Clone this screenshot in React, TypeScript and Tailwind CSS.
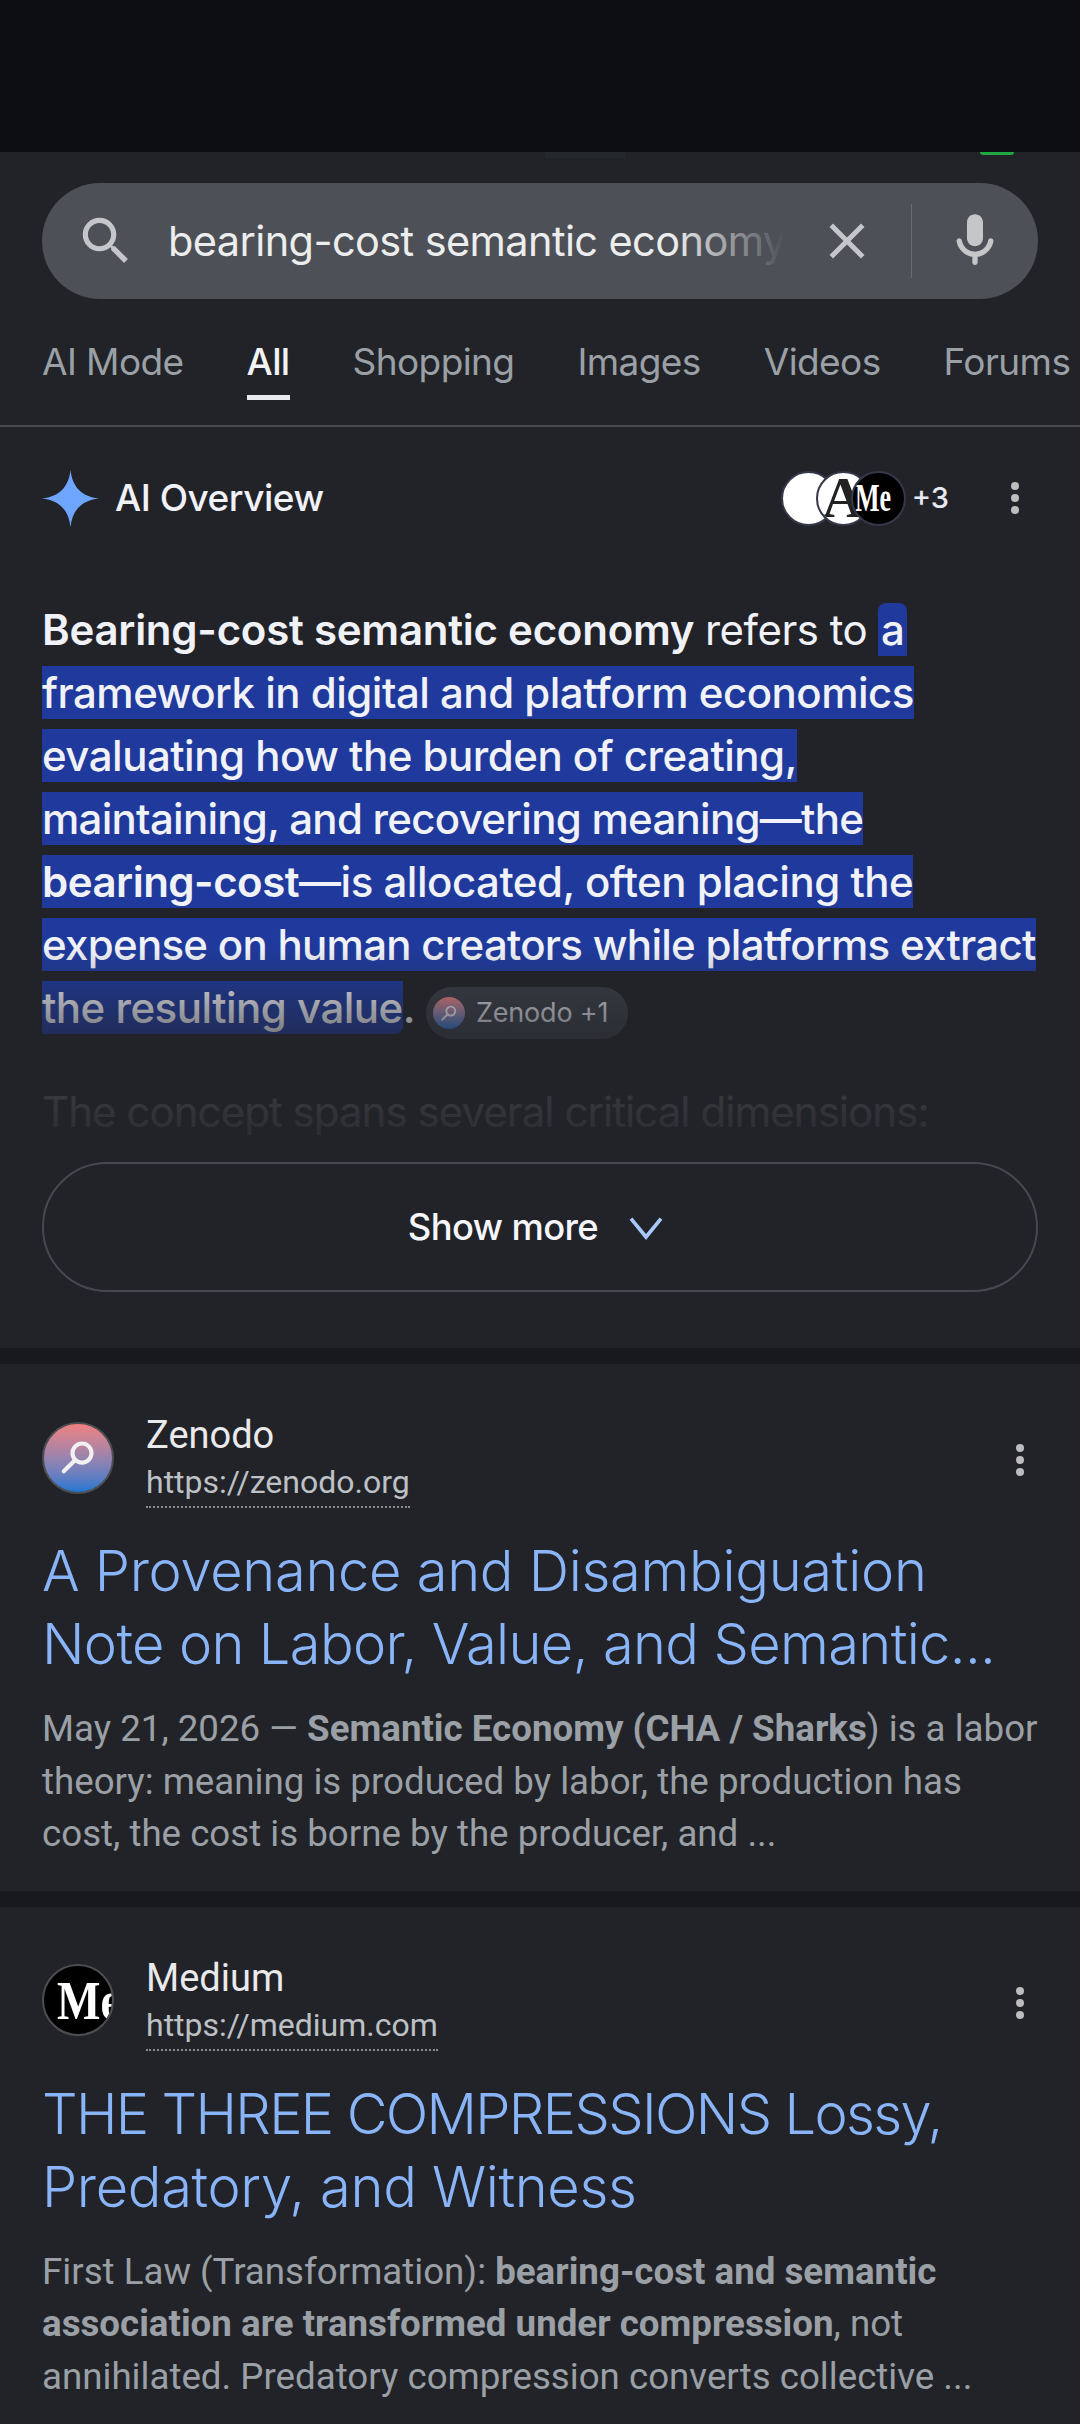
const sans = "font-['Inter','Noto_Sans',sans-serif]";

const tabs = ["AI Mode", "All", "Shopping", "Images", "Videos", "Forums"];

const ZenodoLogo = ({ className }: { className: string }) => (
  <div className={`flex shrink-0 items-center justify-center rounded-full bg-gradient-to-b from-[#f08080] to-[#1976d2] ${className}`}>
    <svg viewBox="0 0 24 24" className="h-[56%] w-[56%]" fill="none" stroke="#f1f1f1" strokeWidth="2.6">
      <circle cx="14.5" cy="9.5" r="6" />
      <path d="M10 14L3 21" strokeLinecap="round" />
    </svg>
  </div>
);

const MeLogo = ({ className, text, textClass }: { className: string; text: string; textClass: string }) => (
  <div className={`flex shrink-0 items-center overflow-hidden rounded-full bg-black font-['Liberation_Serif',serif] font-bold text-white ${className}`}>
    <span className={`whitespace-nowrap ${textClass}`}>{text}</span>
  </div>
);

const Dots = ({ className }: { className: string }) => (
  <div className={`flex flex-col gap-1 ${className}`}>
    <span className="h-2 w-2 rounded-full bg-[#bdbdbd]" />
    <span className="h-2 w-2 rounded-full bg-[#bdbdbd]" />
    <span className="h-2 w-2 rounded-full bg-[#bdbdbd]" />
  </div>
);

const Mark = ({ children, className = "" }: { children: React.ReactNode; className?: string }) => (
  <span className={`bg-[#1f3a9c] py-px ${className}`}>{children}</span>
);

const Result = ({
  logo,
  name,
  url,
  title,
  children,
  urlWidth,
}: {
  logo: React.ReactNode;
  name: string;
  url: string;
  title: React.ReactNode;
  children: React.ReactNode;
  urlWidth: string;
}) => (
  <section className="bg-[#222328] px-[42px] pt-[57px] font-['Roboto',sans-serif]">
    <div className="flex h-[73px] items-center">
      {logo}
      <div className="ml-[32px] flex-1 pt-[5px]">
        <div className="text-[38px] leading-[46px] text-[#eaeaec]">{name}</div>
        <div className={`border-b-2 border-dotted border-[#8a8c90] text-[32px] leading-[48px] text-[#bdc1c6] ${urlWidth}`}>{url}</div>
      </div>
      <Dots className="mr-[14px] mt-[5px]" />
    </div>
    <h3 className={`mt-[41px] text-[56px] font-light leading-[73px] text-[#8ab4f8] ${sans}`}>{title}</h3>
    <p className="mt-[22px] pb-[30px] text-[36.7px] leading-[52.5px] text-[#9aa0a6]">{children}</p>
  </section>
);

export default function App() {
  return (
    <div className={`h-[2424px] w-[1080px] overflow-hidden bg-[#222328] ${sans}`}>
      <div className="relative h-[152px] bg-[#0d0e13]">
        <span className="absolute -bottom-[6px] left-[545px] h-[6px] w-[80px] bg-[#25282b]" />
        <span className="absolute -bottom-[3px] left-[980px] h-[3px] w-[34px] rounded-b-full bg-[#1fa83f]" />
      </div>

      <div className="px-[42px] pt-[31px]">
        <div className="flex h-[116px] items-center rounded-[58px] bg-[#4d5056]">
          <svg viewBox="0 0 24 24" className="ml-[33px] h-[62px] w-[62px] shrink-0" fill="#c4c6c9">
            <path d="M15.5 14h-.79l-.28-.27C15.41 12.59 16 11.11 16 9.5 16 5.91 13.09 3 9.5 3S3 5.91 3 9.5 5.91 16 9.5 16c1.61 0 3.09-.59 4.23-1.57l.27.28v.79l5 4.99L20.49 19l-4.99-5zm-6 0C7.01 14 5 11.99 5 9.5S7.01 5 9.5 5 14 7.01 14 9.5 11.99 14 9.5 14z" />
          </svg>
          <div className="relative ml-[31px] w-[616px] overflow-hidden whitespace-nowrap text-[41.5px] leading-[52px] tracking-[-0.6px] text-[#eceded]">
            bearing-cost semantic economy
            <span className="absolute inset-y-0 right-0 w-[110px] bg-gradient-to-r from-transparent to-[#4d5056]" />
          </div>
          <svg viewBox="0 0 24 24" className="ml-[33px] h-[60px] w-[60px] shrink-0" fill="#c4c6c9">
            <path d="M19 6.41L17.59 5 12 10.59 6.41 5 5 6.41 10.59 12 5 17.59 6.41 19 12 13.41 17.59 19 19 17.59 13.41 12z" />
          </svg>
          <div className="ml-[34px] h-[74px] w-px bg-[#686b70]" />
          <svg viewBox="0 0 24 24" className="ml-[31px] h-[64px] w-[64px] shrink-0" fill="#c4c6c9">
            <path d="M12 14c1.66 0 3-1.34 3-3V5c0-1.66-1.34-3-3-3S9 3.34 9 5v6c0 1.66 1.34 3 3 3zm5.91-3c-.49 0-.9.36-.98.85C16.52 14.2 14.47 16 12 16s-4.52-1.8-4.93-4.15c-.08-.49-.49-.85-.98-.85-.61 0-1.09.54-1 1.14.49 3 2.89 5.35 5.91 5.78V20c0 .55.45 1 1 1s1-.45 1-1v-2.08c3.02-.43 5.42-2.78 5.91-5.78.1-.6-.39-1.14-1-1.14z" />
          </svg>
        </div>
      </div>

      <nav className="mt-[41px] flex h-[87px] gap-[63px] overflow-hidden whitespace-nowrap border-b-2 border-[#4a4c50] pl-[42px] text-[37px] tracking-[-0.6px]">
        {tabs.map((tab) => (
          <div
            key={tab}
            className={
              tab === "All"
                ? "relative h-[60px] font-medium leading-[44px] text-[#f1f3f4]"
                : "leading-[44px] text-[#9aa0a6]"
            }
          >
            {tab}
            {tab === "All" && <span className="absolute bottom-0 left-0 right-0 h-[5px] bg-[#e8eaed]" />}
          </div>
        ))}
      </nav>

      <section className="relative h-[921px] px-[42px]">
        <div className="flex h-[142px] items-center">
          <svg viewBox="0 0 24 24" className="h-[57px] w-[57px] shrink-0" fill="#6ea6ff">
            <path d="M12 0C12.8 7 16.5 11.2 24 12C16.5 12.8 12.8 17 12 24C11.2 17 7.5 12.8 0 12C7.5 11.2 11.2 7 12 0Z" />
          </svg>
          <span className="ml-[16px] text-[37px] font-medium tracking-[-0.5px] text-[#f1f1f8]">AI Overview</span>
          <div className="ml-auto flex items-center">
            <div className="h-[55px] w-[55px] rounded-full border-2 border-[#343848] bg-white" />
            <MeLogo className="-ml-[20px] h-[55px] w-[55px] justify-center border-2 border-[#343848] !bg-white !text-[#222]" textClass="text-[58px] leading-none" text="A" />
            <MeLogo className="-ml-[20px] h-[55px] w-[55px] border-2 border-[#343848] pl-[2px]" textClass="origin-left scale-x-[0.65] text-[40px]" text="Me" />
            <span className="ml-[6px] text-[29px] font-medium text-[#e8e9f3]">+3</span>
          </div>
          <Dots className="ml-[62px] mr-[19px]" />
        </div>

        <div className="mt-[29px] whitespace-nowrap text-[42px] font-[450] leading-[63px] tracking-[-0.5px] text-[#f0f2f8]">
          <b className="font-semibold tracking-[-0.25px]">Bearing-cost semantic economy</b> <span className="font-normal">refers to</span> <Mark className="rounded-t-lg px-[3px]">a</Mark>
          <br />
          <Mark>framework in digital and platform economics</Mark>
          <br />
          <Mark>evaluating how the burden of creating,</Mark>
          <br />
          <Mark className="tracking-[-0.72px]">maintaining, and recovering meaning—the</Mark>
          <br />
          <Mark><b className="font-semibold">bearing-cost</b>—is allocated, often placing the</Mark>
          <br />
          <Mark className="tracking-[-0.72px]">expense on human creators while platforms extract</Mark>
          <br />
          <Mark className="rounded-br-lg">the resulting value</Mark>.
          <span className="ml-[11px] inline-flex h-[52px] w-[202px] items-center rounded-[26px] bg-[#3a3d46] pl-[7px] align-[1px] text-[27px] font-normal leading-[52px] tracking-[-0.2px] text-[#d8dae0]">
            <ZenodoLogo className="h-[32px] w-[32px]" />
            <span className="ml-[11px]">Zenodo +1</span>
          </span>
        </div>

        <p className="mt-[41px] whitespace-nowrap text-[42px] leading-[63px] tracking-[-0.95px] text-[#eceef4]">The concept spans several critical dimensions:</p>

        {/* fade over the clamped text */}
        <div className="absolute inset-x-0 top-[520px] h-[225px] bg-gradient-to-b from-[#22232800] via-[#222328e0] via-[60%] to-[#222328]" />

        <div className="absolute inset-x-[42px] top-[735px] flex h-[130px] items-center justify-center rounded-[65px] border-2 border-[#464852] pr-[6px] text-[36.4px] font-medium tracking-[-0.6px] text-[#f6f6fc]">
          Show more
          <svg viewBox="0 0 24 24" className="ml-[28px] h-[40px] w-[40px]" fill="none" stroke="#a8c7fa" strokeWidth="2.2">
            <path d="M3 7L12 18L21 7" />
          </svg>
        </div>
      </section>

      <div className="h-[16px] bg-[#18191c]" />

      <Result
        logo={<ZenodoLogo className="h-[72px] w-[72px] border-2 border-[#4d4e52]" />}
        name="Zenodo"
        url="https://zenodo.org"
        urlWidth="w-[264px]"
        title={<><span className="tracking-[-0.3px]">A Provenance and Disambiguation</span><br /><span className="tracking-[-0.65px]">Note on Labor, Value, and Semantic...</span></>}
      >
        May 21, 2026 — <b className="font-bold">Semantic Economy (CHA / Sharks</b>) is a labor theory: meaning is produced by labor, the production has cost, the cost is borne by the producer, and ...
      </Result>

      <div className="h-[16px] bg-[#18191c]" />

      <Result
        logo={<MeLogo className="h-[72px] w-[72px] border-2 border-[#4d4e52] pl-[13px]" textClass="origin-left scale-y-[1.2] text-[46px]" text="Me" />}
        name="Medium"
        url="https://medium.com"
        urlWidth="w-[292px]"
        title={<><span className="tracking-[-1.65px]">THE THREE COMPRESSIONS Lossy,</span><br /><span className="tracking-[-0.35px]">Predatory, and Witness</span></>}
      >
        First Law (Transformation): <b className="font-bold">bearing-cost and semantic association are transformed under compression</b>, not annihilated. Predatory compression converts collective ...
      </Result>
    </div>
  );
}
